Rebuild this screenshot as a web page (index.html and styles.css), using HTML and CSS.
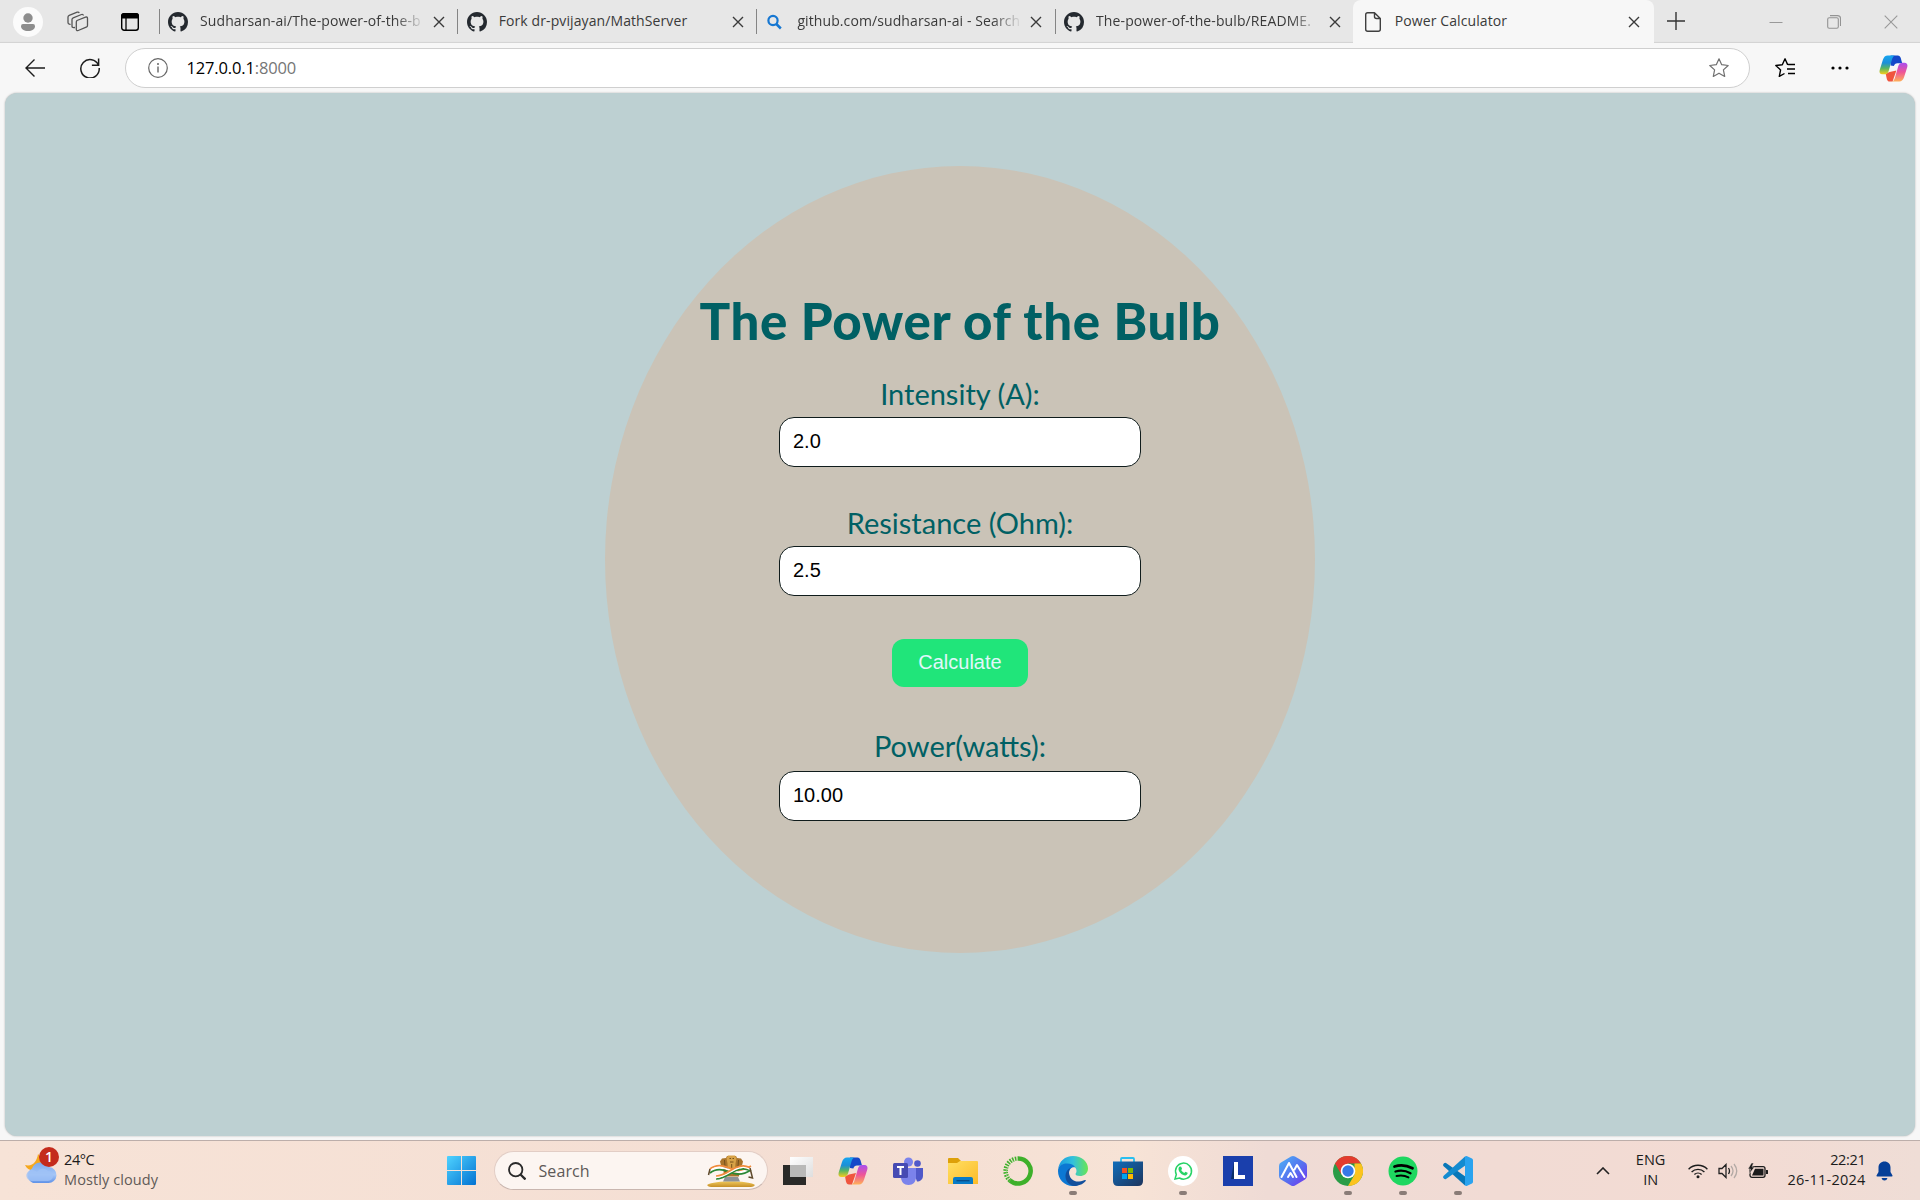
FILE: index.html
```html
<!DOCTYPE html>
<html lang="en">
<head>
<meta charset="utf-8">
<title>Power Calculator</title>
<link rel="stylesheet" href="styles.css">
</head>
<body>
<svg class="defs" aria-hidden="true">
  <defs>
    <linearGradient id="cpA" x1="0" y1="0" x2="0" y2="1"><stop offset="0" stop-color="#16a5f0"/><stop offset=".4" stop-color="#1c8fd8"/><stop offset=".68" stop-color="#58b562"/><stop offset="1" stop-color="#f8cc1c"/></linearGradient>
    <linearGradient id="cpB" x1="0" y1="0" x2="0" y2="1"><stop offset="0" stop-color="#a94df0"/><stop offset=".5" stop-color="#ee5598"/><stop offset="1" stop-color="#ffb057"/></linearGradient>
    <linearGradient id="win" gradientUnits="userSpaceOnUse" x1="0" y1="0" x2="29" y2="29"><stop offset="0" stop-color="#4fd3ff"/><stop offset="1" stop-color="#0372d2"/></linearGradient>
    <linearGradient id="edgeA" x1="0" y1="0" x2="1" y2="0"><stop offset="0" stop-color="#1b9be0"/><stop offset=".5" stop-color="#33c1dc"/><stop offset="1" stop-color="#69e653"/></linearGradient>
    <linearGradient id="folder" x1="0" y1="0" x2="1" y2="1"><stop offset="0" stop-color="#ffdf63"/><stop offset="1" stop-color="#fcbb28"/></linearGradient>
    <linearGradient id="store" x1="0" y1="0" x2="1" y2="1"><stop offset="0" stop-color="#0f6dbb"/><stop offset="1" stop-color="#1e355c"/></linearGradient>
    <linearGradient id="hex" x1="0" y1="0" x2="1" y2="1"><stop offset="0" stop-color="#4bb3f5"/><stop offset=".5" stop-color="#5577f0"/><stop offset="1" stop-color="#7131ee"/></linearGradient>
    <linearGradient id="cloud" x1="0" y1="0" x2="0" y2="1"><stop offset="0" stop-color="#7ba9ee"/><stop offset=".6" stop-color="#a5c6f7"/><stop offset="1" stop-color="#5f92e8"/></linearGradient>
    <linearGradient id="gold" x1="0" y1="0" x2="0" y2="1"><stop offset="0" stop-color="#f0c95c"/><stop offset="1" stop-color="#c68f27"/></linearGradient>
    <linearGradient id="glass" x1="0" y1="0" x2="1" y2="1"><stop offset="0" stop-color="#fff"/><stop offset="1" stop-color="#dedede"/></linearGradient>
    <symbol id="github" viewBox="0 0 16 16"><path fill="#24292f" d="M8 0C3.58 0 0 3.58 0 8c0 3.54 2.29 6.53 5.47 7.59.4.07.55-.17.55-.38 0-.19-.01-.82-.01-1.49-2.01.37-2.53-.49-2.69-.94-.09-.23-.48-.94-.82-1.13-.28-.15-.68-.52-.01-.53.63-.01 1.08.58 1.23.82.72 1.21 1.87.87 2.33.66.07-.52.28-.87.51-1.07-1.78-.2-3.64-.89-3.64-3.95 0-.87.31-1.59.82-2.15-.08-.2-.36-1.02.08-2.12 0 0 .67-.21 2.2.82.64-.18 1.32-.27 2-.27s1.36.09 2 .27c1.53-1.04 2.2-.82 2.2-.82.44 1.1.16 1.92.08 2.12.51.56.82 1.27.82 2.15 0 3.07-1.87 3.75-3.65 3.95.29.25.54.73.54 1.48 0 1.07-.01 1.93-.01 2.2 0 .21.15.46.55.38A8.01 8.01 0 0 0 16 8c0-4.42-3.58-8-8-8z"/></symbol>
    <symbol id="close" viewBox="0 0 12 12"><path d="M1 1l10 10M11 1L1 11" fill="none" stroke="#3a3a3a" stroke-width="1.4"/></symbol>
    <symbol id="copilot" viewBox="0 0 30 28">
      <path fill="#1548c9" d="M12 .5h7.500c1.600 0 2.500 1.200 3 2.700L24 8.500h-5c-2 0-3 1-3.700 3L12 11z"/>
      <path fill="#f0553e" d="M7 19.500l4-2 7-1.500-4 11.500h-3c-1.700 0-2.500-1.300-3-3z"/>
      <path fill="url(#cpA)" d="M9 .5h7.500c-1.600.6-2.400 2-3 4L10 16.500C9.300 18.700 8 20 5.500 20H3.500C.8 20 0 18 .7 15.500L4 5C5 2 6.500.5 9 .5z"/>
      <path fill="url(#cpB)" d="M21 27.500h-7.500c1.600-.6 2.400-2 3-4L20 11.500c.7-2.200 2-3.500 4.500-3.500H26c3 0 4 2 3.300 4.500L26 22.800c-1 3-2.500 4.700-5 4.700z"/>
    </symbol>
  </defs>
</svg>

<header class="tabs">
  <div class="tools">
    <svg class="avatar" viewBox="0 0 30 30"><circle cx="15" cy="15" r="15" fill="#fbfbfb"/><circle cx="15" cy="11" r="4.700" fill="#8d8d8d"/><path fill="#8d8d8d" d="M10 17h10q2 0 2 2.200c0 3-3 4.800-7 4.800s-7-1.800-7-4.800Q8 17 10 17z"/></svg>
    <svg class="stack" viewBox="0 0 22 22" fill="none" stroke="#555" stroke-width="1.300" stroke-linejoin="round"><path d="M10 9.500l8.500-3.300q2-.7 2 1.200v7q0 1.200-1.300 1.700l-8 3.400q-1.900.7-1.900-1.200v-7q0-1.200.7-1.800z"/><path d="M8 16.500l-1.300.2q-1.700 0-1.700-1.400V8.500q0-1.200 1.200-1.700L14.500 3.500q1.500-.5 2 1"/><path d="M3.600 13.500l-1.300-.4q-1.300-.4-1.300-1.700V6q0-1.200 1.200-1.700l8-3.100q1.500-.5 2 .7"/></svg>
    <svg class="pane" viewBox="0 0 18 18"><rect x=".7" y=".7" width="16.600" height="16.600" rx="2.500" fill="none" stroke="#000" stroke-width="1.400"/><path d="M0 5.500V3Q0 0 3 0h12q3 0 3 3v2.500z"/><path d="M5 5v12" stroke="#000" stroke-width="1.300"/></svg>
  </div>
  <div class="tab"><svg class="fav"><use href="#github"/></svg><span class="name fade">Sudharsan-ai/The-power-of-the-b</span><svg class="x"><use href="#close"/></svg></div>
  <div class="tab"><svg class="fav"><use href="#github"/></svg><span class="name">Fork dr-pvijayan/MathServer</span><svg class="x"><use href="#close"/></svg></div>
  <div class="tab"><svg class="fav" viewBox="0 0 20 20" fill="none" stroke="#1677d2"><circle cx="8" cy="8.500" r="4.600" stroke-width="2.200"/><path d="M11.300 12l4.500 4.500" stroke-width="2.500"/></svg><span class="name fade">github.com/sudharsan-ai - Search</span><svg class="x"><use href="#close"/></svg></div>
  <div class="tab"><svg class="fav"><use href="#github"/></svg><span class="name fade">The-power-of-the-bulb/README.</span><svg class="x"><use href="#close"/></svg></div>
  <div class="tab active"><svg class="fav" viewBox="0 0 20 20" fill="none" stroke="#3f3f3f" stroke-width="1.400" stroke-linejoin="round"><path d="M10.500 .7H3.700q-2 0-2 2v14.600q0 2 2 2h10.600q2 0 2-2V6.500zM10.500.7v3.800q0 2 2 2h3.800"/></svg><span class="name">Power Calculator</span><svg class="x"><use href="#close"/></svg></div>
  <svg class="plus" viewBox="0 0 18 18"><path d="M9 0v18M0 9h18" stroke="#333" stroke-width="1.400"/></svg>
  <div class="controls">
    <svg viewBox="0 0 14 14"><path d="M.5 7.500h13" stroke="#999"/></svg>
    <svg viewBox="0 0 14 14" fill="none" stroke="#939393" stroke-width="1.100"><rect x=".7" y="2.700" width="10.600" height="10.600" rx="1.500"/><path d="M3 .6h7.500q3 0 3 3V11"/></svg>
    <svg viewBox="0 0 14 14"><path d="M.7.700l12.600 12.600M13.300.7L.7 13.300" stroke="#999" stroke-width="1.100"/></svg>
  </div>
</header>

<nav class="toolbar">
  <svg class="back" viewBox="0 0 20 18" fill="none" stroke="#1c1c1c" stroke-width="1.400"><path d="M20 9H1M9.500.5L1 9l8.500 8.500"/></svg>
  <svg class="reload" viewBox="0 0 20 20" fill="none" stroke="#1c1c1c" stroke-width="1.500"><path d="M18.500 7.200A9.200 9.200 0 1 0 19.200 10M18.600.5v6.700h-6.700"/></svg>
  <div class="address">
    <svg class="info" viewBox="0 0 20 20"><circle cx="10" cy="10" r="9.300" fill="none" stroke="#666" stroke-width="1.200"/><path d="M10 8.500v6" stroke="#666" stroke-width="1.400"/><circle cx="10" cy="6" r="1" fill="#666"/></svg>
    <span class="url">127.0.0.1<span class="port">:8000</span></span>
    <svg class="star" viewBox="0 0 20 20"><path fill="none" stroke="#707070" stroke-width="1.200" stroke-linejoin="round" d="M10 .8l2.700 5.900 6.500.8-4.800 4.400 1.300 6.500-5.700-3.200-5.700 3.200 1.300-6.500L.8 7.500l6.500-.8z"/></svg>
  </div>
  <svg class="favs" viewBox="0 0 20 20" fill="none" stroke="#000" stroke-width="1.400" stroke-linejoin="round"><path d="M13.500 6.500l-1-.1L10 .8 7.300 6.700.8 7.500l4.800 4.400-1.300 6.500 5.200-2.900M13.500 6.500H20M12 11h8M13 15.500h7"/></svg>
  <svg class="more" viewBox="0 0 18 4"><circle cx="2" cy="2" r="1.600"/><circle cx="9" cy="2" r="1.600"/><circle cx="16" cy="2" r="1.600"/></svg>
  <svg class="cp"><use href="#copilot"/></svg>
</nav>

<main class="page">
  <form class="bulb">
    <h1>The Power of the Bulb</h1>
    <label class="intensity" for="i">Intensity (A):</label>
    <input id="i" type="text" value="2.0">
    <label class="resistance" for="r">Resistance (Ohm):</label>
    <input id="r" type="text" value="2.5">
    <button type="button">Calculate</button>
    <label class="power" for="p">Power(watts):</label>
    <input id="p" type="text" value="10.00">
  </form>
</main>

<footer class="taskbar">
  <div class="weather">
    <svg viewBox="0 0 36 38"><path fill="#f5a81f" d="M13 7c-1 7-5 13-13 11 2 5 8 7 13 4s5-11 0-15z"/><path fill="url(#cloud)" d="M8 36a8 8 0 0 1-1-14.500A9.500 9.500 0 0 1 24 20a8 8 0 0 1-1 16z"/><path fill="#9fc2f6" opacity=".8" d="M7 34a6 5.500 0 1 1 5-9 7 7 0 0 1 11-1 5 5 0 0 1 0 10z"/><circle cx="24" cy="10" r="10" fill="#c42b1c"/><text x="24" y="15" text-anchor="middle" class="badge">1</text></svg>
    <div class="lines"><span class="temp">24°C</span><span class="sky">Mostly cloudy</span></div>
  </div>
  <svg class="start" viewBox="0 0 29 29" fill="url(#win)"><path d="M1 0h13v14H0V1q0-1 1-1z"/><path d="M15 0h13q1 0 1 1v13H15z"/><path d="M0 15h14v14H1q-1 0-1-1z"/><path d="M15 15h14v13q0 1-1 1H15z"/></svg>
  <div class="search">
    <svg class="lens" viewBox="0 0 18 18" fill="none" stroke="#2a2a2a"><circle cx="7.700" cy="7.700" r="6.700" stroke-width="1.800"/><path d="M12.500 12.500l5 5" stroke-width="2.300"/></svg>
    <span>Search</span>
    <svg class="emblem" viewBox="0 0 48 34">
      <path fill="url(#gold)" d="M0 31c8-5 40-5 48 0-1 1-2 2-4 2H4c-2 0-3-1-4-2z"/>
      <path fill="#8d9297" d="M18 23h13l2 4.500H16z"/>
      <path fill="#a9742b" d="M20 2h9l1 2 4 .5 2 3-1 4-2 1-1 10H17l-1-10-2-1-1-4 2-3 4-.5z"/>
      <path fill="#d7a247" d="M21 1.500h7l1.500 3-1 5-.5 9h-7l-.5-9-1-5z"/>
      <path fill="none" stroke="#75501c" d="M22.500 4.500h1.500m1.500 0H27M23 8h3.500M24.700 10v9M17.500 6l1 14M31.500 6l-1 14"/>
      <g fill="none" stroke-width="1.700">
        <path stroke="#f08b3c" d="M3 15c6-5 12-4 18-1.500s13 5 23-1.500"/>
        <path stroke="#fff" d="M3 17c6-5 12-4 18-1.500s13 5 23-1.500"/>
        <path stroke="#2b8836" d="M3 19c6-5 12-4 18-1.500s13 5 23-1.500M9 25c8 0 14-6 20-8.500s9-2 14 0"/>
        <path stroke="#fff" d="M9 23.400c8 0 14-6 20-8.500s9-2 14 0"/>
        <path stroke="#f08b3c" d="M9 22c8 0 14-6 20-8.500s9-2 14 0"/>
      </g>
      <path fill="none" stroke="#5f4a2c" stroke-width="1.500" d="M3 15l-1.500 6M43 14l2.500 10-4-1"/>
    </svg>
  </div>
  <div class="apps">
    <div class="app"><svg viewBox="0 0 30 30"><path fill="#2a2a28" d="M0 9h23v20H0z"/><path fill="url(#glass)" d="M7 1h23v20H7z"/><path fill="#b9b9b8" d="M7 9h16v12H7z"/></svg></div>
    <div class="app"><svg viewBox="0 0 30 28"><use href="#copilot"/></svg></div>
    <div class="app"><svg viewBox="0 0 30 30"><circle cx="15.500" cy="6" r="4.500" fill="#7b83eb"/><circle cx="24.500" cy="7.500" r="3.300" fill="#5059c9"/><path fill="#5059c9" d="M19 12h11v7.500c0 4-3 6-6 6z"/><path fill="#7b83eb" d="M8 12h15v9c0 5-3 8-7.500 8S8 26 8 21z"/><rect y="7" width="15" height="15" rx="1.500" fill="#464bb3"/><path d="M4 11h7M7.500 11v8" stroke="#fff" stroke-width="2"/></svg></div>
    <div class="app"><svg viewBox="0 0 30 30"><path fill="#dda009" d="M0 3q0-1 1-1h9l3 3-2 4H0z"/><path fill="url(#folder)" d="M0 7h9l3-2h17q1 0 1 1v22H0z"/><path fill="#087bc7" d="M5 28v-5q0-2 2-2h16q2 0 2 2v5z"/><path d="M8.500 24.700h13" stroke="#084c88" stroke-width="1.300"/></svg></div>
    <div class="app"><svg viewBox="0 0 30 30" fill="none" stroke="#3eb02a" stroke-width="4.500"><path d="M15 2.500a12.500 12.500 0 1 1-8 22"/><path d="M7 24.500A12.500 12.500 0 0 1 15 2.500" stroke-dasharray="1.500 1.200"/><path d="M5.500 24A13 13 0 0 1 15 4" stroke="#9bd58c" stroke-width="1" stroke-dasharray="2 2"/></svg></div>
    <div class="app run"><svg viewBox="0 0 30 30"><path fill="url(#edgeA)" d="M0 14C1 5 7 0 15 0c9 0 15 6 15 12.500 0 5-4 7.500-8 7.500-3 0-4.500-1-4.500-2 0-.8 1-1 1-3C18.500 11 14 8 9 8c-5 0-9 3-9 6z"/><path fill="#0c78d3" d="M0 15C0 10 4 7.500 9 7.500c4 0 7 1.500 8.500 4-4-1-6.500 2-6.500 6 0 6 5 11 9 11.500-1.500.7-3 1-5 1C6 30 0 23 0 15z"/><path fill="#124f9c" d="M11 16c0 7 5.500 10 10 9.500 3 0 5-1.500 6-1.500s1 .7.500 1.300C25 28.500 20 30 16 30 10 29 7.500 24 7.500 20.500S9 13 13.500 11.500C12 12.500 11 14 11 16z"/></svg></div>
    <div class="app"><svg viewBox="0 0 30 30"><path d="M8 7V3q0-1 1-1h11q1 0 1 1v4" fill="none" stroke="#29bff0" stroke-width="1.800"/><path fill="url(#store)" d="M0 5.500h30V25q0 5-5 5H5q-5 0-5-5z"/><path fill="#f25022" d="M9 12h5v5H9z"/><path fill="#7fba00" d="M15 12h5v5h-5z"/><path fill="#00a4ef" d="M9 18h5v5H9z"/><path fill="#ffb900" d="M15 18h5v5h-5z"/></svg></div>
    <div class="app run"><svg viewBox="0 0 30 30"><circle cx="15" cy="15" r="15" fill="#fff"/><path d="M7 23l1.300-4.500A8 8 0 1 1 11.500 22z" fill="none" stroke="#27d366" stroke-width="1.500"/><path fill="#27d366" d="M12 10.500l1.200.2.900 2.200-1 1.200q1.200 2.200 3.200 3l1.100-1.300 2.200 1c.3 1.500-1 2.600-2.500 2.600-3 0-6.600-3.800-6.600-6.500 0-1.300.7-2.200 1.500-2.400z"/></svg></div>
    <div class="app"><svg viewBox="0 0 30 30"><path fill="#1a3fac" d="M0 0h30v30H0z"/><path fill="#0b2f67" d="M8 23l3-17 3 17z"/><path d="M13 6v15h9" fill="none" stroke="#fff" stroke-width="4"/></svg></div>
    <div class="app"><svg viewBox="0 0 30 30"><path fill="url(#hex)" d="M15 0q1 0 2 .6l10 6q2 1 2 3.400v10q0 2-2 3.400l-10 6q-2 1.200-4 0l-10-6Q1 22.400 1 20V10q0-2.400 2-3.400l10-6Q14 0 15 0z"/><path d="M3.500 21L11 7l7.500 14M10 21l2.500-4 2.500 4M16.500 13.500L19 9l7.500 12" fill="none" stroke="#fff" stroke-width="2" stroke-linecap="round" stroke-linejoin="round"/></svg></div>
    <div class="app run"><svg viewBox="0 0 30 30"><circle cx="15" cy="15" r="15" fill="#2a9c46"/><path fill="#e33b2e" d="M2 7.500A15 15 0 0 1 28 7.500H15L8.500 18.700z"/><path fill="#fcc31e" d="M28 7.500A15 15 0 0 1 15 30l6.500-11.200V7.500z"/><circle cx="15" cy="15" r="7.300" fill="#fff"/><circle cx="15" cy="15" r="5.700" fill="#3679e8"/></svg></div>
    <div class="app run"><svg viewBox="0 0 30 30"><circle cx="15" cy="15" r="14.500" fill="#1ed760"/><g fill="none" stroke="#000" stroke-linecap="round"><path d="M6.500 10.500c6-1.800 12-1.300 18 1.700" stroke-width="2.800"/><path d="M7.500 15.500c5-1.400 10-1 15 1.700" stroke-width="2.300"/><path d="M8.500 20c4-1 8-.8 12 1.400" stroke-width="1.900"/></g></svg></div>
    <div class="app run"><svg viewBox="0 0 30 30"><path fill="#0877b8" d="M3 7q-1-.5-2 .3l-.7 1q-.6 1 .4 2L22 29.500l1-8.500z"/><path fill="#148bd0" d="M3 23q-1 .5-2-.3l-.7-1q-.6-1 .4-2L22 .5l1 8.500z"/><path fill="#2aa3ef" d="M22 .4q1-.7 2.200-.1l4.800 2.300q1 .6 1 1.700v21.400q0 1.100-1 1.700l-4.800 2.300q-1.200.6-2.200-.1z"/></svg></div>
  </div>
  <div class="tray">
    <svg class="chev" viewBox="0 0 14 8"><path d="M1 7l6-6 6 6" fill="none" stroke="#222" stroke-width="1.600"/></svg>
    <div class="lang"><span>ENG</span><span>IN</span></div>
    <svg class="wifi" viewBox="0 0 20 16" fill="none" stroke="#1c1c1c" stroke-width="1.400"><path d="M.6 6.200a13.300 13.300 0 0 1 18.800 0M3.600 9a9 9 0 0 1 12.800 0M6.400 11.600a5.200 5.200 0 0 1 7.200 0"/><circle cx="10" cy="13.800" r="1.500" fill="#1c1c1c" stroke="none"/></svg>
    <svg class="sound" viewBox="0 0 20 16" fill="none" stroke="#222" stroke-width="1.300"><path d="M1 5.500h3L8 1.500v13L4 10.500H1zM10.500 5q2 3 0 6"/><path d="M13 3q4 5 0 10M16 1q5.500 7 0 14" stroke="#b3a9a5"/></svg>
    <svg class="battery" viewBox="0 0 20 16"><rect x="2" y="3.700" width="15" height="10.600" rx="2" fill="none" stroke="#1c1c1c" stroke-width="1.300"/><path fill="#1c1c1c" d="M18 7h1.500q.5 0 .5.500v3q0 .5-.5.500H18zM4 12.500L7 5.700h8.500v6.800z"/><path d="M3.500 0L0 6h2.500L1.500 10.500 6.500 4H4L5.500 0z" fill="#1c1c1c" stroke="#efdcd5" stroke-width=".5"/></svg>
    <div class="clock"><span class="time">22:21</span><span class="date">26-11-2024</span></div>
    <svg class="bell" viewBox="0 0 17 20" fill="#053f98"><path d="M8.500.5C12 .5 14.500 3 14.500 6.500V11l2 3.500q.3 1-.8 1H1.300q-1.100 0-.8-1l2-3.500V6.500C2.500 3 5 .5 8.500.5zM5.500 17h6q-.7 2.500-3 2.500t-3-2.500z"/></svg>
  </div>
</footer>
</body>
</html>
```
FILE: styles.css
```css
* { box-sizing: border-box; }
body {
  margin: 0;
  width: 1920px;
  height: 1200px;
  overflow: hidden;
  display: flex;
  flex-direction: column;
  background: #f7f7f7;
  font-family: "Open Sans", "Noto Sans", sans-serif;
  color: #1c1c1c;
}
svg { display: block; flex: none; }
.defs { position: absolute; width: 0; height: 0; }

/* tab strip */
.tabs {
  flex: none;
  height: 43px;
  display: flex;
  align-items: center;
  background: #e7e7e7;
  box-shadow: inset 0 -2px 1px -1px #d2d2d2;
}
.tools { width: 158.500px; padding-left: 13px; display: flex; align-items: center; }
.avatar { width: 30px; height: 30px; }
.stack { width: 22px; height: 22px; margin-left: 24px; }
.pane { width: 18px; height: 18px; margin-left: 32px; }
.tab {
  position: relative;
  width: 298.700px;
  height: 43px;
  display: flex;
  align-items: center;
  padding-left: 9.500px;
}
.tab:not(.active)::before {
  content: "";
  position: absolute;
  left: 0;
  top: 9px;
  width: 1px;
  height: 25px;
  background: #858585;
}
.fav { width: 20px; height: 20px; }
.name {
  width: 224px;
  margin: -2px 0 0 12px;
  white-space: nowrap;
  font-size: 14px;
  line-height: 24px;
  letter-spacing: 0.1px;
  color: #3a3a3a;
}
.fade {
  -webkit-mask-image: linear-gradient(90deg, #000 195px, transparent 225px);
  mask-image: linear-gradient(90deg, #000 195px, transparent 225px);
}
.x { width: 12px; height: 12px; margin: 1px 0 0 9px; }
.tab.active { width: 301px; background: #f7f7f7; border-radius: 8px 8px 0 0; padding-left: 10.500px; }
.tab.active .name { margin-left: 11px; }
.plus { width: 18px; height: 18px; margin: -1px 0 0 12.500px; }
.controls { display: flex; gap: 43.500px; margin-left: 84.500px; }
.controls svg { width: 14px; height: 14px; }

/* toolbar */
.toolbar { flex: none; height: 50px; display: flex; align-items: center; padding-left: 25px; }
.back { width: 20px; height: 18px; margin-top: -1px; }
.reload { width: 20px; height: 20px; margin: -1px 0 0 35px; }
.address {
  width: 1625px;
  height: 40px;
  margin-left: 25px;
  display: flex;
  align-items: center;
  background: #fff;
  border: 1px solid #cfcfcf;
  border-radius: 20px;
  padding: 0 20px 0 22px;
}
.info { width: 20px; height: 20px; }
.url { flex: 1; margin: -1px 0 0 18.500px; font-size: 16.500px; letter-spacing: -0.150px; color: #000; }
.port { color: #767676; }
.star { width: 20px; height: 20px; }
.favs { width: 20px; height: 20px; margin-left: 25px; }
.more { width: 18px; height: 4px; margin-left: 36px; }
.cp { width: 29px; height: 27px; margin-left: 29.500px; }

/* calculator page */
.page {
  flex: none;
  width: 1910px;
  height: 1043px;
  margin: 0 auto 4px;
  padding-top: 73px;
  background: #bdd0d2;
  border-radius: 12px;
  box-shadow: 0 0 2px #aaa;
}
.bulb {
  width: 710px;
  height: 787px;
  margin: 0 auto;
  padding-top: 125px;
  display: flex;
  flex-direction: column;
  align-items: center;
  background: #cac3b7;
  border-radius: 50%;
  color: #006064;
}
h1 {
  margin: 0;
  font: 900 51px/60px Lato, sans-serif;
  letter-spacing: 0.650px;
  white-space: nowrap;
}
label { font: 400 29px/40px Lato, sans-serif; white-space: nowrap; }
.intensity { margin-top: 23px; }
.resistance { margin-top: 36px; }
.power { margin-top: 39px; }
.power + input { margin-top: 5px; }
input {
  width: 362px;
  height: 50px;
  margin-top: 3px;
  padding: 0 13px 1px;
  border: 1px solid #101c1c;
  border-radius: 15px;
  background: #fff;
  font: 20px "Liberation Sans", sans-serif;
  color: #000;
}
button {
  width: 136px;
  height: 48px;
  margin-top: 43px;
  padding: 0 0 2px;
  border: 0;
  border-radius: 12px;
  background: #20e57a;
  color: #e0f7fa;
  font: 20px "Liberation Sans", sans-serif;
}

/* taskbar */
.taskbar {
  flex: none;
  height: 60px;
  display: flex;
  align-items: center;
  border-top: 1px solid #bcaeaa;
  background: linear-gradient(90deg, #f7e3d7, #f4ded3 45%, #f7e3d6 59%, #efdbd5 66%, #f3dbd3 90%, #efddd6);
}
.weather { width: 447px; display: flex; align-items: center; padding-left: 25px; }
.weather svg { width: 36px; height: 38px; margin-top: -9px; }
.badge { font: 600 14px "Open Sans", sans-serif; fill: #fff; }
.lines { display: flex; flex-direction: column; font-size: 14.500px; line-height: 20px; margin: -1px 0 0 3px; }
.temp { letter-spacing: -0.4px; }
.sky { color: #615a57; letter-spacing: 0.1px; }
.start { width: 29px; height: 29px; }
.search {
  width: 274px;
  height: 39px;
  margin-left: 17.500px;
  display: flex;
  align-items: center;
  padding: 0 12px 0 13px;
  border: 1px solid #e2cdc5;
  border-bottom-color: #c9b6af;
  border-radius: 20px;
  background: #fcf5f1;
}
.lens { width: 18px; height: 18px; }
.search span { flex: 1; margin-left: 13px; font-size: 16px; letter-spacing: 0.1px; color: #5d5957; }
.emblem { width: 48px; height: 34px; }
.apps { display: flex; margin-left: 2.500px; }
.app { position: relative; width: 55.050px; display: flex; justify-content: center; }
.app svg { width: 30px; height: 30px; }
.run::after {
  content: "";
  position: absolute;
  left: 23.500px;
  top: 35px;
  width: 8px;
  height: 4px;
  border-radius: 2px;
  background: #8a7c77;
}
.tray { display: flex; align-items: center; margin-left: 110px; }
.chev { width: 14px; height: 8px; }
.lang, .clock { display: flex; flex-direction: column; font-size: 14.500px; line-height: 20px; margin-top: -1px; }
.lang { width: 30px; margin-left: 26px; align-items: center; }
.wifi { width: 20px; height: 16px; margin-left: 22px; }
.sound { width: 20px; height: 16px; margin-left: 10px; }
.battery { width: 20px; height: 16px; margin-left: 10px; }
.clock { width: 80px; align-items: flex-end; margin-left: 18px; }
.time { letter-spacing: -0.3px; }
.date { letter-spacing: 0.25px; }
.bell { width: 17px; height: 20px; margin-left: 10px; }
```
